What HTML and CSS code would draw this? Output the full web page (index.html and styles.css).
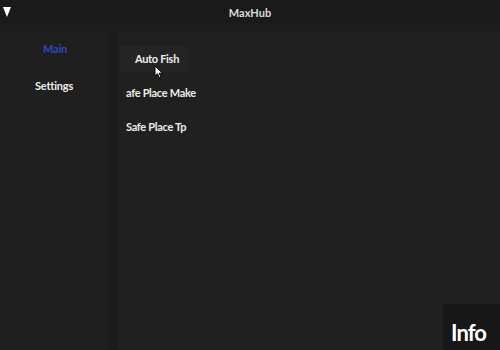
FILE: index.html
```html
<!DOCTYPE html>
<html>
<head>
<meta charset="utf-8">
<link rel="stylesheet" href="styles.css">
</head>
<body>
<div class="window">
  <div class="titlebar">
    <span class="toggle"></span>
    <span class="title">MaxHub</span>
  </div>
  <div class="band"></div>
  <div class="main">
    <div class="sidebar">
      <div class="tab active">Main</div>
      <div class="tab">Settings</div>
    </div>
    <div class="divider"></div>
    <div class="content">
      <div class="btn hover">Auto Fish</div>
      <div class="btn left">afe Place Make</div>
      <div class="btn left">Safe Place Tp</div>
    </div>
  </div>
  <div class="info">Info</div>
  <svg class="cursor" width="10" height="14" viewBox="0 0 10 14"><path d="M1 1 L1 11 L3.5 8.8 L5.5 12.8 L7 12 L5.2 8.2 L8.5 8.2 Z" fill="#fff" stroke="#000" stroke-width="1"/></svg>
</div>
</body>
</html>
```
FILE: styles.css
```css
html, body {
  margin: 0;
  padding: 0;
  width: 500px;
  height: 350px;
  overflow: hidden;
  background: #1f1f1f;
  font-family: Lato, "Open Sans", sans-serif;
  font-weight: 700;
  color: #ececec;
}
.window {
  position: relative;
  width: 500px;
  height: 350px;
  display: flex;
  flex-direction: column;
}
.titlebar {
  height: 23px;
  background: #1a1a1a;
  display: flex;
  align-items: center;
  justify-content: center;
  position: relative;
}
.toggle {
  position: absolute;
  left: 3px;
  top: 7px;
  width: 0;
  height: 0;
  border-left: 4px solid transparent;
  border-right: 4px solid transparent;
  border-top: 10px solid #fff;
}
.title {
  font-size: 11px;
  color: #dcdcdc;
  padding-top: 1px;
}
.band {
  height: 11px;
  background: linear-gradient(#1c1c1c, #1e1e1e);
}
.main {
  flex: 1;
  display: flex;
}
.sidebar {
  width: 108px;
  background: #1f1f1f;
  display: flex;
  flex-direction: column;
  align-items: center;
  padding-top: 7px;
  gap: 21px;
}
.tab {
  font-size: 11px;
  line-height: 16px;
  color: #ededed;
  letter-spacing: -0.2px;
}
.tab.active {
  color: #3346c0;
  padding-left: 2px;
}
.divider {
  width: 10px;
  background: #1b1b1b;
}
.content {
  flex: 1;
  background: #202020;
  padding: 12px 0 0 2px;
  display: flex;
  flex-direction: column;
  gap: 8px;
  align-items: flex-start;
}
.btn {
  font-size: 11px;
  height: 26px;
  line-height: 26px;
  color: #ededed;
  letter-spacing: -0.3px;
}
.btn.hover {
  background: #242424;
  width: 68px;
  padding-left: 6px;
  box-sizing: border-box;
  text-align: center;
}
.btn.left {
  padding-left: 6px;
}
.info {
  position: absolute;
  right: 0;
  bottom: 0;
  width: 57px;
  height: 46px;
  background: #171717;
  font-size: 22px;
  letter-spacing: -1px;
  color: #fff;
  display: flex;
  align-items: flex-end;
  justify-content: center;
  padding: 0 6px 6px 0;
  box-sizing: border-box;
  line-height: 22px;
}
.cursor {
  position: absolute;
  left: 154px;
  top: 65px;
}
```
